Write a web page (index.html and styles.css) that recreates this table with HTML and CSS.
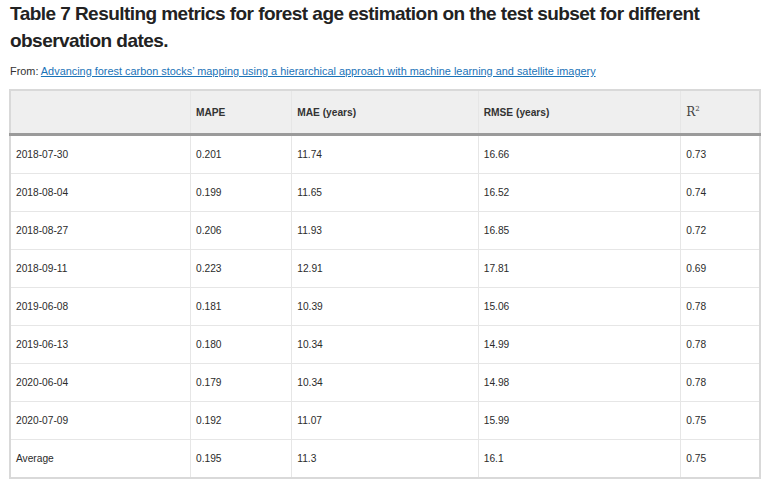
FILE: index.html
```html
<!DOCTYPE html>
<html>
<head>
<meta charset="utf-8">
<link rel="stylesheet" href="styles.css">
</head>
<body>
<h1 class="title">Table 7 Resulting metrics for forest age estimation on the test subset for different observation dates.</h1>
<p class="from">From: <a href="#">Advancing forest carbon stocks’ mapping using a hierarchical approach with machine learning and satellite imagery</a></p>
<table class="data">
<colgroup>
<col class="c1"><col class="c2"><col class="c3"><col class="c4"><col class="c5">
</colgroup>
<thead>
<tr><th></th><th>MAPE</th><th>MAE (years)</th><th>RMSE (years)</th><th class="math">R<sup>2</sup></th></tr>
</thead>
<tbody>
<tr><td>2018-07-30</td><td>0.201</td><td>11.74</td><td>16.66</td><td>0.73</td></tr>
<tr><td>2018-08-04</td><td>0.199</td><td>11.65</td><td>16.52</td><td>0.74</td></tr>
<tr><td>2018-08-27</td><td>0.206</td><td>11.93</td><td>16.85</td><td>0.72</td></tr>
<tr><td>2018-09-11</td><td>0.223</td><td>12.91</td><td>17.81</td><td>0.69</td></tr>
<tr><td>2019-06-08</td><td>0.181</td><td>10.39</td><td>15.06</td><td>0.78</td></tr>
<tr><td>2019-06-13</td><td>0.180</td><td>10.34</td><td>14.99</td><td>0.78</td></tr>
<tr><td>2020-06-04</td><td>0.179</td><td>10.34</td><td>14.98</td><td>0.78</td></tr>
<tr><td>2020-07-09</td><td>0.192</td><td>11.07</td><td>15.99</td><td>0.75</td></tr>
<tr><td>Average</td><td>0.195</td><td>11.3</td><td>16.1</td><td>0.75</td></tr>
</tbody>
</table>
</body>
</html>
```
FILE: styles.css
```css
html, body {
  margin: 0;
  padding: 0;
  background: #fff;
}
body {
  font-family: "Liberation Sans", Arial, sans-serif;
  color: #222;
  padding: 0 7px 0 9px;
}
.title {
  margin: 0;
  padding: 0 0 0 1px;
  font-size: 19px;
  line-height: 27px;
  font-weight: bold;
  color: #222;
  letter-spacing: -0.55px;
}
.from {
  margin: 10px 0 0 1px;
  font-size: 10.9px;
  line-height: 14px;
  color: #333;
}
.from a {
  color: #1a73b8;
  text-decoration: underline;
}
.data {
  margin-top: 11px;
  width: 752px;
  border-collapse: collapse;
  table-layout: fixed;
  border: 2px solid #d9d9d9;
  font-size: 10.2px;
  color: #2b2b2b;
}
.c1 { width: 180px; }
.c2 { width: 101px; }
.c3 { width: 186px; }
.c4 { width: 202px; }
.c5 { width: 79px; }
.data th, .data td {
  text-align: left;
  padding: 0 5px;
  border: 1px solid #e6e6e6;
  vertical-align: middle;
}
.data thead th {
  background: #efefef;
  height: 42px;
  font-weight: bold;
  color: #333;
  border-bottom: 3px solid #9a9a9a;
}
.data tbody td {
  height: 37px;
}
.data th.math {
  font-family: "DejaVu Serif", "Liberation Serif", serif;
  font-weight: normal;
  font-size: 12px;
  color: #444;
}
.data th.math sup {
  font-size: 7px;
  vertical-align: 5px;
}
```
